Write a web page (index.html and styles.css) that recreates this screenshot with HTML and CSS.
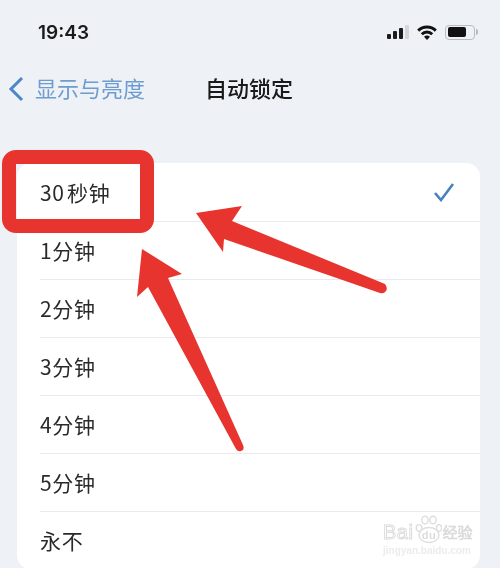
FILE: index.html
```html
<!DOCTYPE html>
<html lang="zh-CN">
<head>
  <meta charset="UTF-8" />
  <meta name="viewport" content="width=device-width, initial-scale=1.0"/>
  <title>自动锁定</title>
  <link rel="stylesheet" href="styles.css">
</head>
<body>
  <div class="page">
    <div class="status">
      <span class="time">19:43</span>
      <div class="status-icons">
        <svg class="signal" width="22" height="14" viewBox="0 0 22 14">
          <rect x="0" y="9" width="4" height="5" rx="1" fill="#1c1c1c"/>
          <rect x="6" y="6" width="4" height="8" rx="1" fill="#1c1c1c"/>
          <rect x="12" y="3" width="4" height="11" rx="1" fill="#1c1c1c"/>
          <rect x="18" y="0" width="4" height="14" rx="1" fill="#d4d6d8"/>
        </svg>
        <svg class="wifi" width="20" height="15" viewBox="0 0 20 15">
          <path d="M1.2 5.6 A12.5 12.5 0 0 1 18.8 5.6" fill="none" stroke="#111" stroke-width="3"/>
          <path d="M4.8 9.2 A7.4 7.4 0 0 1 15.2 9.2" fill="none" stroke="#111" stroke-width="3"/>
          <path d="M10 15 L7 11.8 A4.4 4.4 0 0 1 13 11.8 Z" fill="#111"/>
        </svg>
        <div class="battery"><div class="battery-fill"></div></div>
      </div>
    </div>

    <div class="nav">
      <svg class="chevron" width="16" height="26" viewBox="0 0 16 26">
        <path d="M14 2 L3 13 L14 24" fill="none" stroke="#4a86c8" stroke-width="3"/>
      </svg>
      <span class="back">显示与亮度</span>
      <span class="title">自动锁定</span>
    </div>

    <div class="card">
      <div class="row">
        <span class="first">30 秒钟</span>
        <svg class="check" width="22" height="20" viewBox="0 0 22 20">
          <path d="M2 11 L8 18 L20 2" fill="none" stroke="#4a80bd" stroke-width="2.6"/>
        </svg>
      </div>
      <div class="row"><span>1分钟</span></div>
      <div class="row"><span>2分钟</span></div>
      <div class="row"><span>3分钟</span></div>
      <div class="row"><span>4分钟</span></div>
      <div class="row"><span>5分钟</span></div>
      <div class="row"><span>永不</span></div>
    </div>

    <div class="highlight"></div>

    <svg class="arrows" width="500" height="568" viewBox="0 0 500 568">
      <path d="M196 213 L242 206 L232 221 L385 284 Q388 288 386 291 Q384 294 380 293 L224 239 L223 252 Z" fill="#e8342f"/>
      <path d="M142 249 L182 274 L168 278 L243 445 Q245 450 241 451 Q238 452 236 449 L148 287 L137 297 Z" fill="#e8342f"/>
    </svg>

    <div class="watermark">
      <div class="wm-logo">
        <span>Bai</span>
        <svg width="27" height="29" viewBox="0 0 27 29">
          <g fill="#fff" stroke="#dedede" stroke-width="1.4">
            <ellipse cx="4" cy="13" rx="2.8" ry="3.4"/>
            <ellipse cx="10" cy="5" rx="3.2" ry="3.8"/>
            <ellipse cx="18" cy="5" rx="3.2" ry="3.8"/>
            <ellipse cx="24" cy="13" rx="2.6" ry="3.4"/>
            <ellipse cx="14" cy="20" rx="10" ry="7.5"/>
          </g>
          <text class="wm-du" x="14" y="24" text-anchor="middle">du</text>
        </svg>
        <span class="wm-cn">经验</span>
      </div>
      <div class="wm-url">jingyan.baidu.com</div>
    </div>
  </div>
</body>
</html>
```

FILE: styles.css
```css
html, body { margin: 0; padding: 0; }
body { background: #eef2f6; font-family: "Noto Sans CJK SC", sans-serif; }

.page {
  position: relative;
  width: 500px;
  height: 568px;
  overflow: hidden;
  background: #eef2f6;
  filter: blur(0.4px);
}

.status {
  height: 64px;
  display: flex;
  align-items: center;
  justify-content: space-between;
  padding: 0 25px 0 38px;
}
.time { font-family: Inter, sans-serif; font-size: 19px; font-weight: 600; color: #1a1a1a; }
.status-icons { display: flex; align-items: center; gap: 8px; }

.battery {
  position: relative;
  width: 30px;
  height: 15px;
  box-sizing: border-box;
  border: 1.5px solid #b9bcbf;
  border-radius: 4px;
  padding: 1.5px;
}
.battery::after {
  content: "";
  position: absolute;
  right: -4px;
  top: 3px;
  width: 2px;
  height: 6px;
  border-radius: 0 2px 2px 0;
  background: #b9bcbf;
}
.battery-fill { width: 18px; height: 100%; background: #111; border-radius: 2px; }

.nav {
  height: 50px;
  box-sizing: border-box;
  padding: 0 0 4px 8px;
  display: flex;
  align-items: center;
  font-size: 22px;
}
.chevron { margin-top: 4px; }
.back { color: #6d9dd0; margin-left: 11px; width: 170px; }
.title { color: #1a1a1a; font-weight: 500; }

.card {
  margin: 49px 20px 0 17px;
  background: #fff;
  border-radius: 14px;
}
.row {
  height: 58px;
  box-sizing: border-box;
  margin-left: 23px;
  display: flex;
  align-items: center;
  justify-content: space-between;
  padding-right: 25px;
  font-size: 21px;
  letter-spacing: 0.7px;
  color: #2a2a2a;
}
.row + .row { border-top: 1px solid #e8eaed; padding-bottom: 2px; }
.first { word-spacing: -3px; }

.highlight {
  position: absolute;
  left: 2px;
  top: 150px;
  width: 124px;
  height: 55px;
  border: 14px solid #e8342f;
  border-radius: 14px;
}

.arrows { position: absolute; left: 0; top: 0; }

.watermark { position: absolute; left: 383px; top: 515px; width: 92px; }
.wm-logo {
  display: flex;
  align-items: flex-end;
  font-family: "Liberation Sans", sans-serif;
  font-size: 20px;
  line-height: 24px;
  letter-spacing: 0.5px;
  color: #fff;
  -webkit-text-stroke: 1px #dcdcdc;
}
.wm-logo svg { margin-left: 2px; flex: none; }
.wm-du { font-size: 11px; font-weight: 700; fill: #dcdcdc; stroke: none; -webkit-text-stroke: 0; }
.wm-cn { font-family: "Noto Sans CJK SC", sans-serif; font-size: 15px; letter-spacing: 0; color: #e2e2e2; -webkit-text-stroke: 0.5px #d4d4d4; }
.wm-url { font-family: "Liberation Sans", sans-serif; font-size: 10px; line-height: 12px; margin-top: 1px; font-weight: 700; color: #ececec; }
```
